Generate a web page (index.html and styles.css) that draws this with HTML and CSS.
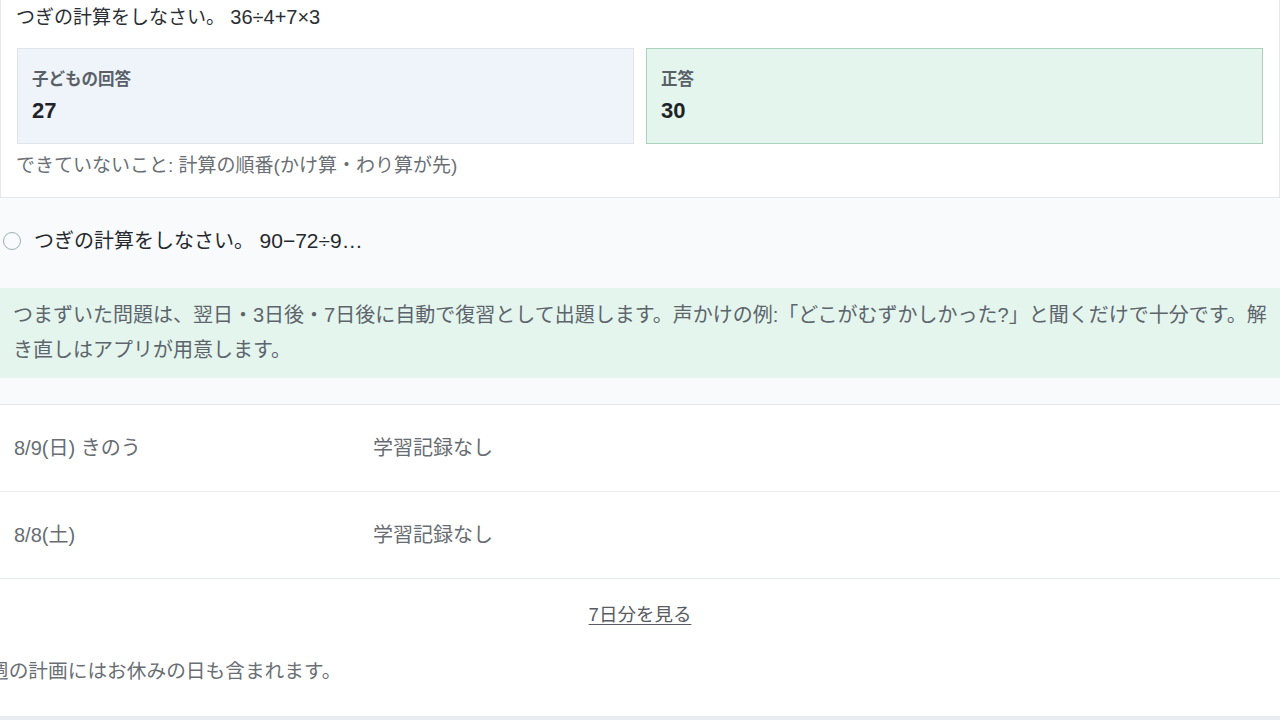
FILE: index.html
```html
<!DOCTYPE html>
<html lang="ja">
<head>
<meta charset="utf-8">
<title>学習の記録</title>
<link rel="stylesheet" href="styles.css">
</head>
<body>
<main class="page">
  <section class="card">
    <p class="question">つぎの計算をしなさい。 <span class="math">36÷4+7×3</span></p>
    <div class="answers">
      <div class="answer answer-child">
        <div class="answer-label">子どもの回答</div>
        <div class="answer-value">27</div>
      </div>
      <div class="answer answer-correct">
        <div class="answer-label">正答</div>
        <div class="answer-value">30</div>
      </div>
    </div>
    <p class="missing">できていないこと: 計算の順番(かけ算・わり算が先)</p>
  </section>

  <div class="item">
    <span class="item-circle"></span>
    <span class="item-text">つぎの計算をしなさい。 <span class="math">90−72÷9…</span></span>
  </div>

  <div class="notice">つまずいた問題は、翌日・3日後・7日後に自動で復習として出題します。声かけの例:「どこがむずかしかった?」と聞くだけで十分です。解き直しはアプリが用意します。</div>

  <div class="spacer"></div>

  <section class="history">
    <div class="day-row">
      <span class="day-date">8/9(日) きのう</span>
      <span class="day-status">学習記録なし</span>
    </div>
    <div class="day-row">
      <span class="day-date">8/8(土)</span>
      <span class="day-status">学習記録なし</span>
    </div>
    <div class="more-wrap"><a class="more" href="#">7日分を見る</a></div>
    <p class="note">週の計画にはお休みの日も含まれます。</p>
  </section>
</main>
</body>
</html>
```

FILE: styles.css
```css
* { box-sizing: border-box; }

html, body {
  margin: 0;
  padding: 0;
}

body {
  width: 1280px;
  height: 720px;
  overflow: hidden;
  background: #e9ecf1;
  font-family: "Liberation Sans", "Noto Sans CJK JP", sans-serif;
  font-size: 20px;
  color: #2b2f34;
}

.page {
  background: #f9fafc;
}

.card {
  background: #ffffff;
  border: 1px solid #e4e8ed;
  border-top: 0;
  padding: 2px 16px 16px;
}

.question {
  margin: 0 0 0 -1px;
  line-height: 30px;
  font-size: 19px;
  color: #2b2f34;
}

.math {
  font-size: 20px;
}

.answers {
  margin-top: 15px;
  display: grid;
  grid-template-columns: 1fr 1fr;
  gap: 12px;
}

.answer {
  height: 96px;
  padding: 16px 14px 0;
  border: 1px solid #e0e5ed;
  background: #eff3fa;
}

.answer-correct {
  background: #e3f5ec;
  border-color: #abd0bc;
}

.answer-label {
  font-size: 16.5px;
  font-weight: 700;
  line-height: 28px;
  color: #5a6068;
}

.answer-value {
  margin-top: 2px;
  font-size: 22px;
  font-weight: 700;
  line-height: 32px;
  color: #1f2328;
}

.missing {
  margin: 7px 0 0 -1px;
  line-height: 30px;
  font-size: 19px;
  color: #6b7076;
}

.item {
  display: flex;
  align-items: center;
  gap: 13px;
  height: 90px;
  padding: 0 0 4px 3px;
}

.item-circle {
  width: 18px;
  height: 18px;
  border: 1.5px solid #9db0b4;
  border-radius: 50%;
  flex: none;
}

.item-text {
  line-height: 30px;
  color: #25292e;
}

.item-text .math {
  font-size: 21px;
}

.notice {
  background: #e4f5ed;
  padding: 10px 8px 10px 13px;
  line-height: 35px;
  height: 90px;
  color: #5d646c;
}

.spacer {
  height: 27px;
  border-bottom: 1px solid #e4e7ec;
}

.history {
  background: #ffffff;
  height: 312px;
  border-bottom: 1px solid #e6e9ee;
}

.day-row {
  display: grid;
  grid-template-columns: 359px 1fr;
  padding: 28px 14px 0;
  height: 87px;
  line-height: 30px;
  color: #686d73;
  border-top: 1px solid #e6e9ee;
}

.day-row:first-child {
  border-top: 0;
  height: 86px;
  padding-top: 28px;
}

.more-wrap {
  border-top: 1px solid #e6e9ee;
  padding-top: 20px;
  text-align: center;
  line-height: 30px;
}

.more {
  font-size: 18.5px;
  color: #575c62;
  text-decoration: underline;
  text-underline-offset: 3px;
}

.note {
  margin: 26px 0 0;
  line-height: 30px;
  font-size: 19.7px;
  color: #6a6f75;
  text-indent: -11px;
}
```
